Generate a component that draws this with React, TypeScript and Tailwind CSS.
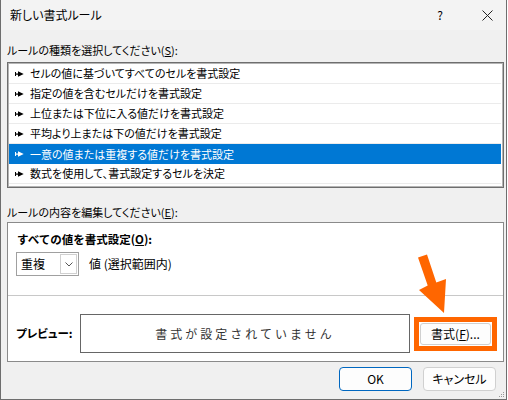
import React from 'react';

const ruleTypes = [
    'セルの値に基づいてすべてのセルを書式設定',
    '指定の値を含むセルだけを書式設定',
    '上位または下位に入る値だけを書式設定',
    '平均より上または下の値だけを書式設定',
    '一意の値または重複する値だけを書式設定',
    '数式を使用して、書式設定するセルを決定',
];

const Bullet: React.FC<{ color: string }> = ({ color }) => (
    <svg width="9" height="6" viewBox="0 0 9 6" className="shrink-0">
        <rect x="0" y="1" width="1" height="4" fill={color} />
        <rect x="0" y="2.5" width="5" height="1.2" fill={color} />
        <path d="M3 0.3 L8.7 3 L3 5.7 Z" fill={color} />
    </svg>
);

const App: React.FC = () => {
    const selected = 4;

    return (
        <div className="w-[508px] h-[400px] bg-white font-['Noto_Sans_CJK_JP',sans-serif] text-[12px] text-black">
            <div className="relative w-[507px] h-[400px] bg-[#f0f0f0] border-l border-r border-b border-[#6e6e6e] flex flex-col">
                {/* Title bar */}
                <div className="h-[30px] bg-[#f3f3f3] flex items-center shrink-0">
                    <span className="pl-[9px] [font-feature-settings:'palt'] leading-none">新しい書式ルール</span>
                    <span className="ml-auto mr-[39px] text-[12px] leading-none">?</span>
                    <svg width="11" height="11" viewBox="0 0 11 11" className="mr-[13px]">
                        <path d="M0.5 0.5 L10.5 10.5 M10.5 0.5 L0.5 10.5" stroke="#222" strokeWidth="1" />
                    </svg>
                </div>

                <div className="pl-[6px] pr-[2px] flex flex-col">
                    <div className="mt-[12px] mb-[4px] h-[16px] leading-[16px] text-[11px] [font-feature-settings:'palt']">
                        ルールの種類を選択してください(<span className="underline">S</span>):
                    </div>

                    {/* Rule type list */}
                    <div className="h-[126px] bg-white border border-[#6e6e6e] shadow-[inset_0_0_0_1px_#b4b4b4] p-[1px] pr-[2px] text-[11px]">
                        {ruleTypes.map((t, i) => (
                            <div
                                key={t}
                                className={
                                    i === selected
                                        ? 'h-[20px] flex items-center gap-[6px] pl-[6px] bg-[#0078d4] text-white [font-feature-settings:\'palt\']'
                                        : 'h-[20px] flex items-center gap-[6px] pl-[6px] border-b border-[#ebebeb] [font-feature-settings:\'palt\']'
                                }
                            >
                                <Bullet color={i === selected ? '#ffffff' : '#000000'} />
                                <span className="leading-none">{t}</span>
                            </div>
                        ))}
                    </div>

                    <div className="mt-[16px] mb-[2px] h-[16px] leading-[16px] text-[11px] [font-feature-settings:'palt']">
                        ルールの内容を編集してください(<span className="underline">E</span>):
                    </div>

                    {/* Rule description */}
                    <div className="h-[140px] bg-white border border-[#8a8a8a] flex flex-col">
                        <div className="h-[73px] pl-[8px] pt-[8px] border-b border-[#c8c8c8]">
                            <div className="h-[16px] leading-[16px] font-bold ml-[1px] text-[11.5px]">
                                すべての値を書式設定(<span className="underline">O</span>):
                            </div>
                            <div className="mt-[5px] flex items-center">
                                <div className="w-[63px] h-[24px] border border-[#a0a0a0] flex items-center pl-[4px] pr-[1px]">
                                    <span className="leading-none">重複</span>
                                    <div className="ml-auto w-[17px] h-[20px] border border-[#d0d0d0] flex items-center justify-center">
                                        <svg width="8" height="5" viewBox="0 0 8 5">
                                            <path d="M0.5 0.5 L4 4 L7.5 0.5" stroke="#555" strokeWidth="1" fill="none" />
                                        </svg>
                                    </div>
                                </div>
                                <span className="ml-[10px] leading-none">値 (選択範囲内)</span>
                            </div>
                        </div>
                        <div className="flex items-center pl-[8px] pt-[18px]">
                            <div className="w-[64px] font-bold leading-none text-[11.5px] [font-feature-settings:'palt']">プレビュー:</div>
                            <div className="w-[330px] h-[39px] border border-[#666666] flex items-center justify-center text-[#333333] tracking-[3px]">
                                書式が設定されていません
                            </div>
                            <div className="ml-[4px] border-[5px] border-[#ff6600] bg-white p-px">
                                <div className="w-[71px] h-[22px] bg-[#fdfdfd] border border-[#d0d0d0] rounded-[3px] flex items-center justify-center leading-none">
                                    書式(<span className="underline">F</span>)...
                                </div>
                            </div>
                        </div>
                    </div>

                    {/* Buttons */}
                    <div className="mt-[5px] flex justify-end gap-[11px] pr-[8px]">
                        <button className="w-[73px] h-[24px] bg-[#fdfdfd] border border-[#0067c0] rounded-[4px] leading-none">
                            OK
                        </button>
                        <button className="w-[73px] h-[24px] bg-[#fdfdfd] border border-[#d0d0d0] rounded-[4px] leading-none [font-feature-settings:'palt']">
                            キャンセル
                        </button>
                    </div>
                </div>

                {/* Highlight arrow */}
                <svg className="absolute left-0 top-0 pointer-events-none" width="508" height="400">
                    <polygon
                        points="417,257.5 426,254.5 435.3,282.6 445,279 443,313 418,290 426.7,285.4"
                        fill="#ff6600"
                    />
                </svg>

                {/* Resize grip */}
                <svg className="absolute right-[1px] bottom-[1px]" width="8" height="8" viewBox="0 0 8 8">
                    <rect x="6" y="2" width="1" height="1" fill="#999" />
                    <rect x="4" y="4" width="1" height="1" fill="#999" />
                    <rect x="6" y="4" width="1" height="1" fill="#999" />
                    <rect x="2" y="6" width="1" height="1" fill="#999" />
                    <rect x="4" y="6" width="1" height="1" fill="#999" />
                    <rect x="6" y="6" width="1" height="1" fill="#999" />
                </svg>
            </div>
        </div>
    );
};

export default App;
